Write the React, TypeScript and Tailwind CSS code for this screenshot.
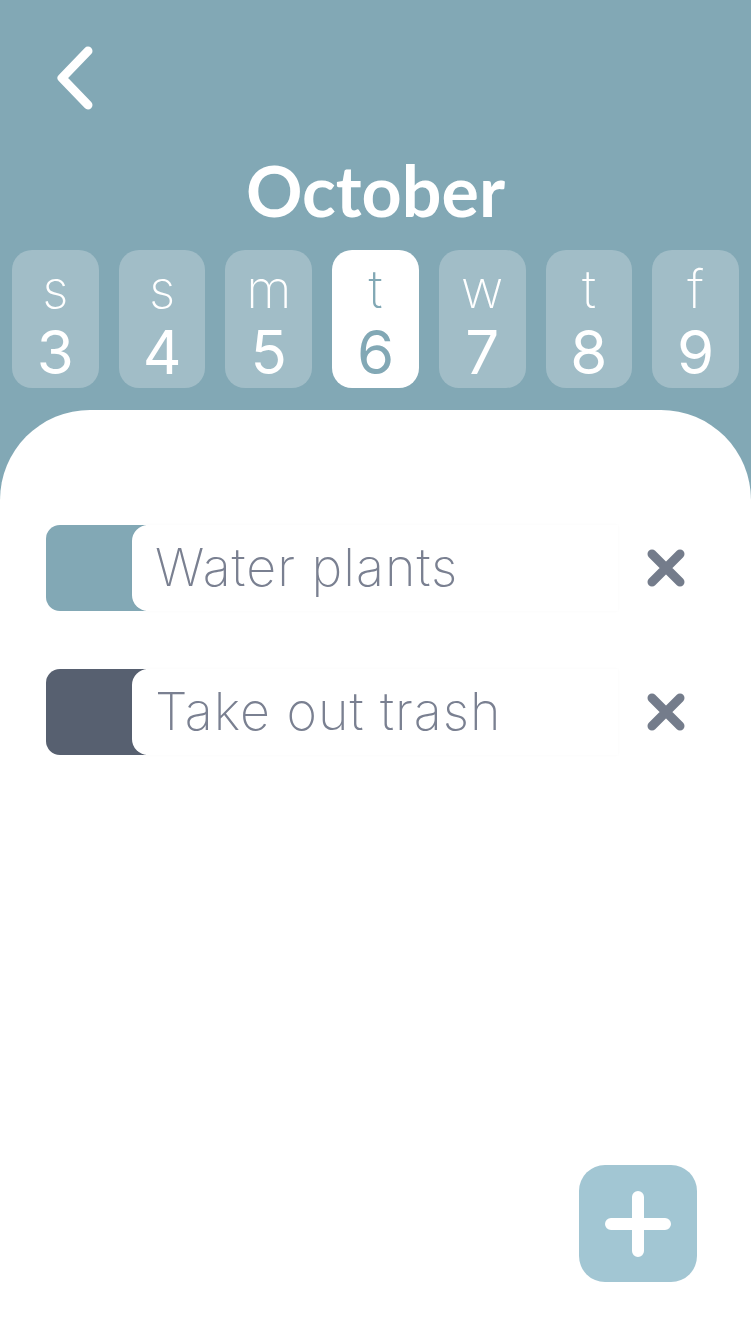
import React from "react"

const days = [
  { letter: "s", num: 3 },
  { letter: "s", num: 4 },
  { letter: "m", num: 5 },
  { letter: "t", num: 6, active: true },
  { letter: "w", num: 7 },
  { letter: "t", num: 8 },
  { letter: "f", num: 9 },
]

const todos = [
  { text: "Water plants", color: "bg-[#82a8b5]" },
  { text: "Take out trash", color: "bg-[#576070]" },
]

function CloseIcon() {
  return (
    <svg width="40" height="40" viewBox="0 0 40 40" fill="none">
      <path d="M6 6 L34 34 M34 6 L6 34" stroke="#747c8b" strokeWidth="9" strokeLinecap="round" />
    </svg>
  )
}

export default function App() {
  return (
    <div className="flex h-[1334px] w-full flex-col bg-[#82a8b5] font-['Inter',sans-serif]">
      {/* Header */}
      <div className="px-[54px] pt-[46px]">
        <svg width="42" height="64" viewBox="0 0 42 64" fill="none">
          <path d="M34 5 L8 32 L34 59" stroke="white" strokeWidth="9" strokeLinecap="round" strokeLinejoin="round" />
        </svg>
      </div>
      <h1 className="mt-[40px] text-center font-['Lato',sans-serif] text-[70px] font-bold leading-[80px] text-white">
        October
      </h1>

      {/* Week strip */}
      <div className="mt-[20px] grid grid-cols-7 gap-[20px] px-[12px]">
        {days.map((d, i) => (
          <div
            key={i}
            className={
              d.active
                ? "flex h-[138px] flex-col items-center rounded-[20px] bg-white pt-[8px] text-[#82a8b5]"
                : "flex h-[138px] flex-col items-center rounded-[20px] bg-[#a1bdc7] pt-[8px] text-white"
            }
          >
            <span className="text-[52px] font-extralight leading-[64px]">{d.letter}</span>
            <span className="text-[60px] font-normal leading-[60px]">{d.num}</span>
          </div>
        ))}
      </div>

      {/* Task panel */}
      <div className="relative mt-[22px] flex-1 rounded-t-[90px] bg-white px-[46px] pt-[115px]">
        <div className="flex flex-col gap-[58px]">
          {todos.map((t) => (
            <div key={t.text} className="flex items-center">
              <div className={`h-[86px] w-[100px] shrink-0 rounded-l-[14px] ${t.color}`} />
              <div className="-ml-[14px] flex h-[86px] w-[486px] items-center rounded-l-[16px] bg-white pl-[23px] shadow-[0_0_3px_rgba(0,0,0,0.03)]">
                <span className="text-[52px] font-extralight tracking-[1px] text-[#7a8091]">{t.text}</span>
              </div>
              <div className="ml-[28px] flex items-center">
                <CloseIcon />
              </div>
            </div>
          ))}
        </div>

        <div className="absolute bottom-[52px] right-[54px] flex h-[117px] w-[118px] items-center justify-center rounded-[26px] bg-[#a2c6d3]">
          <svg width="66" height="66" viewBox="0 0 66 66" fill="none">
            <path d="M33 6 V60 M6 33 H60" stroke="white" strokeWidth="12" strokeLinecap="round" />
          </svg>
        </div>
      </div>
    </div>
  )
}
